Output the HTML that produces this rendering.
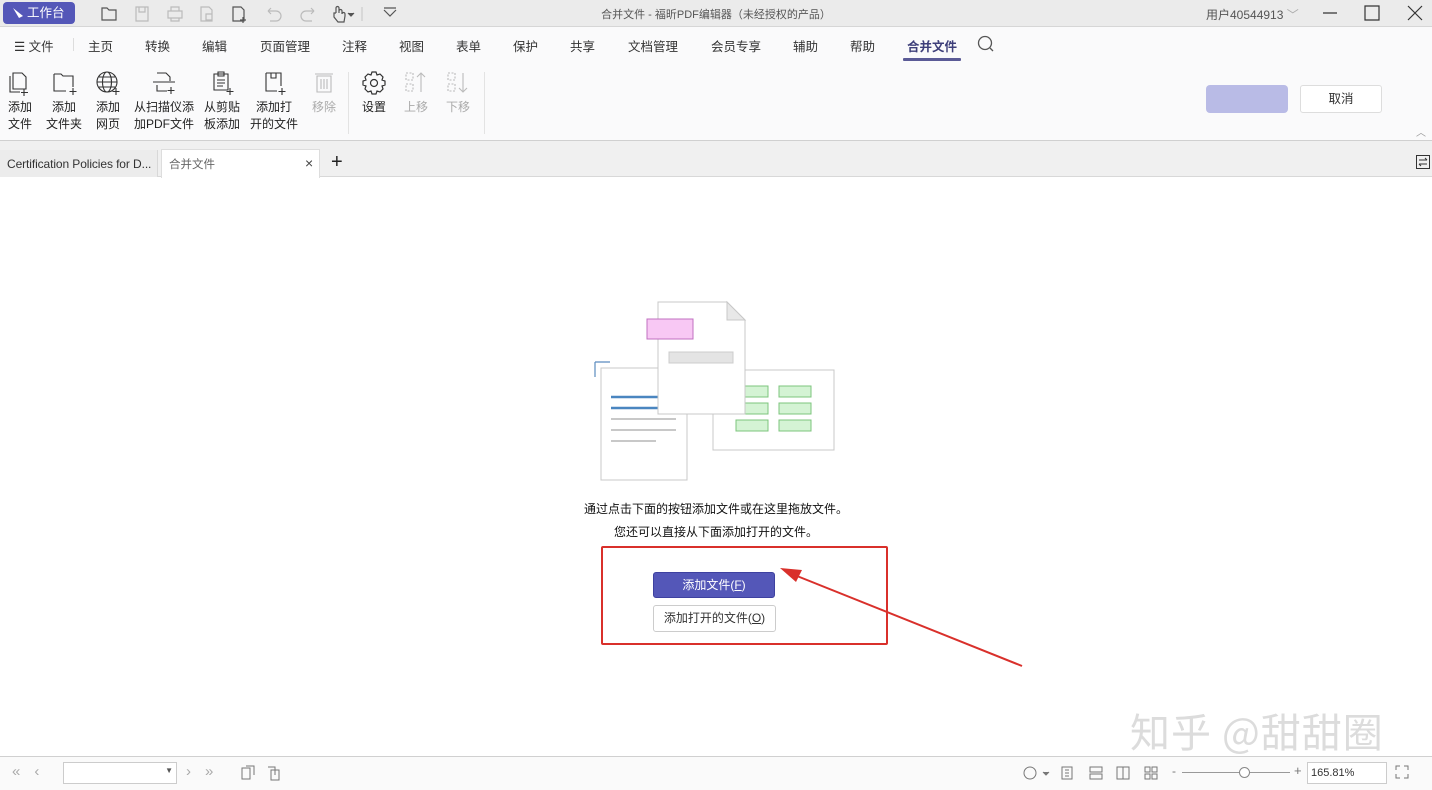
<!DOCTYPE html>
<html><head><meta charset="utf-8">
<style>
*{margin:0;padding:0;box-sizing:border-box}
body{width:1432px;height:790px;overflow:hidden;background:#fff;font-family:"Liberation Sans","Noto Sans CJK SC",sans-serif;font-size:12px;color:#333;position:relative}
.abs{position:absolute}
#title{left:0;top:0;width:1432px;height:27px;background:#ebebeb;border-bottom:1px solid #d6d6d6}
#ribbon{left:0;top:27px;width:1432px;height:114px;background:#fafafb;border-bottom:1px solid #d0d0d0}
#tabs{left:0;top:141px;width:1432px;height:36px;background:#f0f0f0;border-bottom:1px solid #d8d8d8}
#status{left:0;top:756px;width:1432px;height:34px;background:#fafafa;border-top:1px solid #d0d0d0}
.menu span{position:absolute;top:36px;font-size:12.5px;color:#333}
.tool{position:absolute;top:70px;text-align:center;font-size:12px;line-height:17px;color:#222}
.tool svg{display:block;margin:0 auto 3px}
.dis{color:#aaa}
svg{overflow:visible}
</style></head><body>
<div id="title" class="abs">
  <div class="abs" style="left:3px;top:2px;width:72px;height:22px;background:#5457b8;border-radius:4px;color:#fff;font-size:12.5px;line-height:22px;padding-left:24px">工作台
    <svg class="abs" style="left:9px;top:5px" width="12" height="12"><path d="M1 1 L7 11 L11 9 Z" fill="#fff"/></svg></div>
  <svg class="abs" style="left:100px;top:5px" width="300" height="18" fill="none" stroke="#555" stroke-width="1.2">
    <path d="M2 3h5l2 2h7v10H2z"/>
    <path d="M36 2h12v14H36z M39 2v5h6V2" stroke="#bbb"/>
    <path d="M68 6h14v7H68z M71 6V2h8v4 M71 13v3h8v-3" stroke="#bbb"/>
    <path d="M101 2h8l3 3v11h-11z M106 9h6v6h-6z" stroke="#bbb"/>
    <path d="M133 2h8l3 3v11h-11z M143 12v6 M140 15h6"/>
    <path d="M168 6h8a5 5 0 010 10h-6 M168 6l3-3 M168 6l3 3" stroke="#bbb"/>
    <path d="M214 6h-8a5 5 0 000 10h6 M214 6l-3-3 M214 6l-3 3" stroke="#bbb"/>
    <path d="M236 8V3a1.5 1.5 0 013 0v5 M239 8V6a1.5 1.5 0 013 0v3 M236 8h-2v4l4 5h6l1-6v-2a1.5 1.5 0 00-3 0"/>
    <path d="M248 8l3 3 3-3" fill="#555"/>
    <path d="M262 2v14" stroke="#ccc"/>
    <path d="M284 5l6 6 6-6 M284 3h12"/>
  </svg>
  <div class="abs" style="left:0;width:1432px;top:6px;text-align:center;font-size:11px;color:#555">合并文件 - 福昕PDF编辑器（未经授权的产品）</div>
  <div class="abs" style="left:1206px;top:6px;font-size:12px;color:#555">用户40544913 <span style="color:#aaa">﹀</span></div>
  <svg class="abs" style="left:1320px;top:4px" width="110" height="18" fill="none" stroke="#333" stroke-width="1.2">
    <path d="M3 9h14 M45 2h14v14H45z M88 2l14 14 M102 2L88 16"/>
  </svg>
</div>
<div id="ribbon" class="abs"></div>
<div class="menu">
  <span style="left:14px">☰ 文件</span>
  <span class="abs" style="left:73px;top:38px;width:1px;height:13px;background:#ddd"></span>
  <span style="left:88px">主页</span><span style="left:145px">转换</span><span style="left:202px">编辑</span>
  <span style="left:260px">页面管理</span><span style="left:342px">注释</span><span style="left:399px">视图</span>
  <span style="left:456px">表单</span><span style="left:513px">保护</span><span style="left:570px">共享</span>
  <span style="left:628px">文档管理</span><span style="left:711px">会员专享</span><span style="left:793px">辅助</span>
  <span style="left:850px">帮助</span><span style="left:907px;color:#3e3f7a;font-weight:bold">合并文件</span>
</div>
<div class="abs" style="left:903px;top:58px;width:58px;height:3px;background:#5a5a96;border-radius:1px"></div>
<svg class="abs" style="left:977px;top:35px" width="18" height="18" fill="none" stroke="#555" stroke-width="1.3"><circle cx="8" cy="8" r="6.5"/><path d="M13 13l3 3"/></svg>

<div class="tool" style="left:4px;width:32px"><svg width="26" height="26" fill="none" stroke="#333" stroke-width="1.1"><path d="M6 3h9l4 4v12H6z M3 6v16h10 M17 19v7 M14 22.5h7"/></svg>添加<br>文件</div>
<div class="tool" style="left:44px;width:40px"><svg width="26" height="26" fill="none" stroke="#333" stroke-width="1.1"><path d="M3 4h7l2 2h10v11 M3 4v17h12 M22 18v7 M18.5 21.5h7"/></svg>添加<br>文件夹</div>
<div class="tool" style="left:92px;width:32px"><svg width="26" height="26" fill="none" stroke="#333" stroke-width="1.1"><circle cx="12" cy="12" r="10"/><ellipse cx="12" cy="12" rx="4.5" ry="10"/><path d="M2 12h20 M4 7h16 M4 17h16 M21 18v7 M17.5 21.5h7"/></svg>添加<br>网页</div>
<div class="tool" style="left:132px;width:64px"><svg width="26" height="26" fill="none" stroke="#333" stroke-width="1.1"><path d="M6 3h9l4 4v4 M2 12h22 M6 15v6h10 M20 17v7 M16.5 20.5h7"/></svg>从扫描仪添<br>加PDF文件</div>
<div class="tool" style="left:202px;width:40px"><svg width="26" height="26" fill="none" stroke="#333" stroke-width="1.1"><path d="M5 4h14v16H5z M9 2h6v4H9z M8 10h8 M8 13h8 M8 16h6 M21 18v7 M17.5 21.5h7"/></svg>从剪贴<br>板添加</div>
<div class="tool" style="left:248px;width:52px"><svg width="26" height="26" fill="none" stroke="#333" stroke-width="1.1"><path d="M5 3h15v13 M5 3v18h11 M10 3v5h5V3 M21 18v7 M17.5 21.5h7"/></svg>添加打<br>开的文件</div>
<div class="tool dis" style="left:308px;width:32px"><svg width="26" height="26" fill="none" stroke="#bbb" stroke-width="1.1"><path d="M4 4h18 M6 6h14v16H6z M10 9v10 M13 9v10 M16 9v10"/></svg>移除</div>
<div class="abs" style="left:348px;top:72px;width:1px;height:62px;background:#e3e3e3"></div>
<div class="tool" style="left:358px;width:32px"><svg width="26" height="26" fill="none" stroke="#333" stroke-width="1.2"><circle cx="13" cy="13" r="3.5"/><path d="M11 2h4l1 3 3-1 3 3-1 3 3 1v4l-3 1 1 3-3 3-3-1-1 3h-4l-1-3-3 1-3-3 1-3-3-1v-4l3-1-1-3 3-3 3 1z"/></svg>设置</div>
<div class="tool dis" style="left:400px;width:32px"><svg width="26" height="26" fill="none" stroke="#bbb" stroke-width="1.1" stroke-dasharray="2 1.5"><path d="M3 3h7v7H3z M3 14h7v7H3z"/><path d="M18 3v19 M14 7l4-4 4 4" stroke-dasharray="none"/></svg>上移</div>
<div class="tool dis" style="left:442px;width:32px"><svg width="26" height="26" fill="none" stroke="#bbb" stroke-width="1.1" stroke-dasharray="2 1.5"><path d="M3 3h7v7H3z M3 14h7v7H3z"/><path d="M18 3v19 M14 18l4 4 4-4" stroke-dasharray="none"/></svg>下移</div>
<div class="abs" style="left:484px;top:72px;width:1px;height:62px;background:#e3e3e3"></div>

<div class="abs" style="left:1206px;top:85px;width:82px;height:28px;background:#b9bbe6;border-radius:4px"></div>
<div class="abs" style="left:1300px;top:85px;width:82px;height:28px;background:#fff;border:1px solid #ddd;border-radius:3px;text-align:center;line-height:26px;font-size:12.5px">取消</div>
<div class="abs" style="left:1416px;top:124px;font-size:10px;color:#999">︿</div>

<div id="tabs" class="abs">
  <div class="abs" style="left:0;top:9px;width:158px;height:27px;background:#ececec;border-right:1px solid #d8d8d8;padding:7px 0 0 7px;font-size:12px;color:#333;white-space:nowrap;overflow:hidden;letter-spacing:-0.1px">Certification Policies for D...</div>
  <div class="abs" style="left:161px;top:8px;width:159px;height:29px;background:#fff;border:1px solid #ddd;border-bottom:none;padding:6px 0 0 7px;font-size:11.5px;color:#666">合并文件<span class="abs" style="left:143px;top:5px;font-size:14px;color:#444">×</span></div>
  <div class="abs" style="left:331px;top:11px;font-size:20px;color:#222;line-height:20px">+</div>
  <svg class="abs" style="left:1416px;top:14px" width="14" height="14" fill="none" stroke="#333" stroke-width="1"><path d="M.5 .5h13v13H.5z M3 5h8 M9 3l2 2 M11 9H3 M5 11L3 9"/></svg>
</div>

<svg class="abs" style="left:590px;top:298px" width="250" height="190">
  <path d="M5 64v15 M5 64h15" stroke="#5a8bbf" fill="none" stroke-width="1.2"/>
  <rect x="11" y="70" width="86" height="112" fill="#fff" stroke="#c8c8c8"/>
  <path d="M21 99h52 M21 110h52" stroke="#4a86c0" stroke-width="2.5"/>
  <path d="M21 121h65 M21 132h65 M21 143h45" stroke="#c8c8c8" stroke-width="2"/>
  <rect x="123" y="72" width="121" height="80" fill="#fff" stroke="#c8c8c8"/>
  <g fill="#d4f3d4" stroke="#7cc47c"><rect x="146" y="88" width="32" height="11"/><rect x="189" y="88" width="32" height="11"/><rect x="146" y="105" width="32" height="11"/><rect x="189" y="105" width="32" height="11"/><rect x="146" y="122" width="32" height="11"/><rect x="189" y="122" width="32" height="11"/></g>
  <path d="M68 4h69l18 18v94H68z" fill="#fff" stroke="#c8c8c8"/>
  <path d="M137 4v18h18z" fill="#e8e8e8" stroke="#c8c8c8"/>
  <rect x="57" y="21" width="46" height="20" fill="#f8c8f4" stroke="#c070c0"/>
  <rect x="79" y="54" width="64" height="11" fill="#e4e4e4" stroke="#ccc"/>
</svg>

<div class="abs" style="left:0;width:1432px;top:500px;text-align:center;font-size:12px;color:#111">通过点击下面的按钮添加文件或在这里拖放文件。</div>
<div class="abs" style="left:0;width:1432px;top:523px;text-align:center;font-size:12px;color:#111">您还可以直接从下面添加打开的文件。</div>

<div class="abs" style="left:601px;top:546px;width:287px;height:99px;border:2.5px solid #d9302b;border-radius:2px"></div>
<div class="abs" style="left:653px;top:572px;width:122px;height:26px;background:#5457b8;border:1px solid #3e41a0;border-radius:3px;color:#fff;text-align:center;line-height:24px;font-size:12px">添加文件(<u>F</u>)</div>
<div class="abs" style="left:653px;top:605px;width:123px;height:27px;background:#fff;border:1px solid #ccc;border-radius:3px;text-align:center;line-height:25px;font-size:12px">添加打开的文件(<u>O</u>)</div>
<svg class="abs" style="left:770px;top:560px" width="260" height="110"><path d="M252 106 L22 14" stroke="#d9302b" stroke-width="2" fill="none"/><path d="M10 8 L32 10 L26 22 Z" fill="#d9302b"/></svg>

<div class="abs" style="left:1130px;top:706px;font-size:40px;color:#dcdcdc;letter-spacing:1px;font-family:'Noto Sans CJK SC',sans-serif;line-height:48px">知乎 @甜甜圈</div>

<div id="status" class="abs">
  <div class="abs" style="left:12px;top:6px;font-size:15px;color:#aaa;letter-spacing:14px">«‹</div>
  <div class="abs" style="left:63px;top:5px;width:114px;height:22px;border:1px solid #ccc;background:#fff"><span class="abs" style="right:3px;top:3px;font-size:8px;color:#555">▼</span></div>
  <div class="abs" style="left:186px;top:6px;font-size:15px;color:#aaa;letter-spacing:14px">›»</div>
  <svg class="abs" style="left:240px;top:8px" width="50" height="16" fill="none" stroke="#777"><path d="M2 3h8v11H2z M6 1h8v9 M31 5h8v10h-8z M28 2h7v8"/></svg>
  <svg class="abs" style="left:1022px;top:8px" width="140" height="16" fill="none" stroke="#777"><circle cx="8" cy="8" r="6"/><path d="M21 7l3 3 3-3" fill="#777"/><path d="M40 2h10v12H40z M43 5h4 M43 8h4 M43 11h4 M68 2h12v5H68z M68 9h12v5H68z M95 2h12v12H95z M101 2v12 M123 2h5v5h-5z M130 2h5v5h-5z M123 9h5v5h-5z M130 9h5v5h-5z"/></svg>
  <div class="abs" style="left:1172px;top:7px;font-size:12px;color:#777">-</div>
  <div class="abs" style="left:1182px;top:15px;width:108px;height:1px;background:#999"></div>
  <div class="abs" style="left:1239px;top:10px;width:11px;height:11px;border:1px solid #888;border-radius:50%;background:#fff"></div>
  <div class="abs" style="left:1294px;top:6px;font-size:13px;color:#777">+</div>
  <div class="abs" style="left:1307px;top:5px;width:80px;height:22px;border:1px solid #ccc;background:#fff;font-size:11px;padding:4px 0 0 3px;color:#333">165.81%</div>
  <svg class="abs" style="left:1395px;top:8px" width="14" height="14" fill="none" stroke="#777"><path d="M1 5V1h4 M9 1h4v4 M13 9v4H9 M5 13H1V9"/></svg>
</div>
</body></html>
